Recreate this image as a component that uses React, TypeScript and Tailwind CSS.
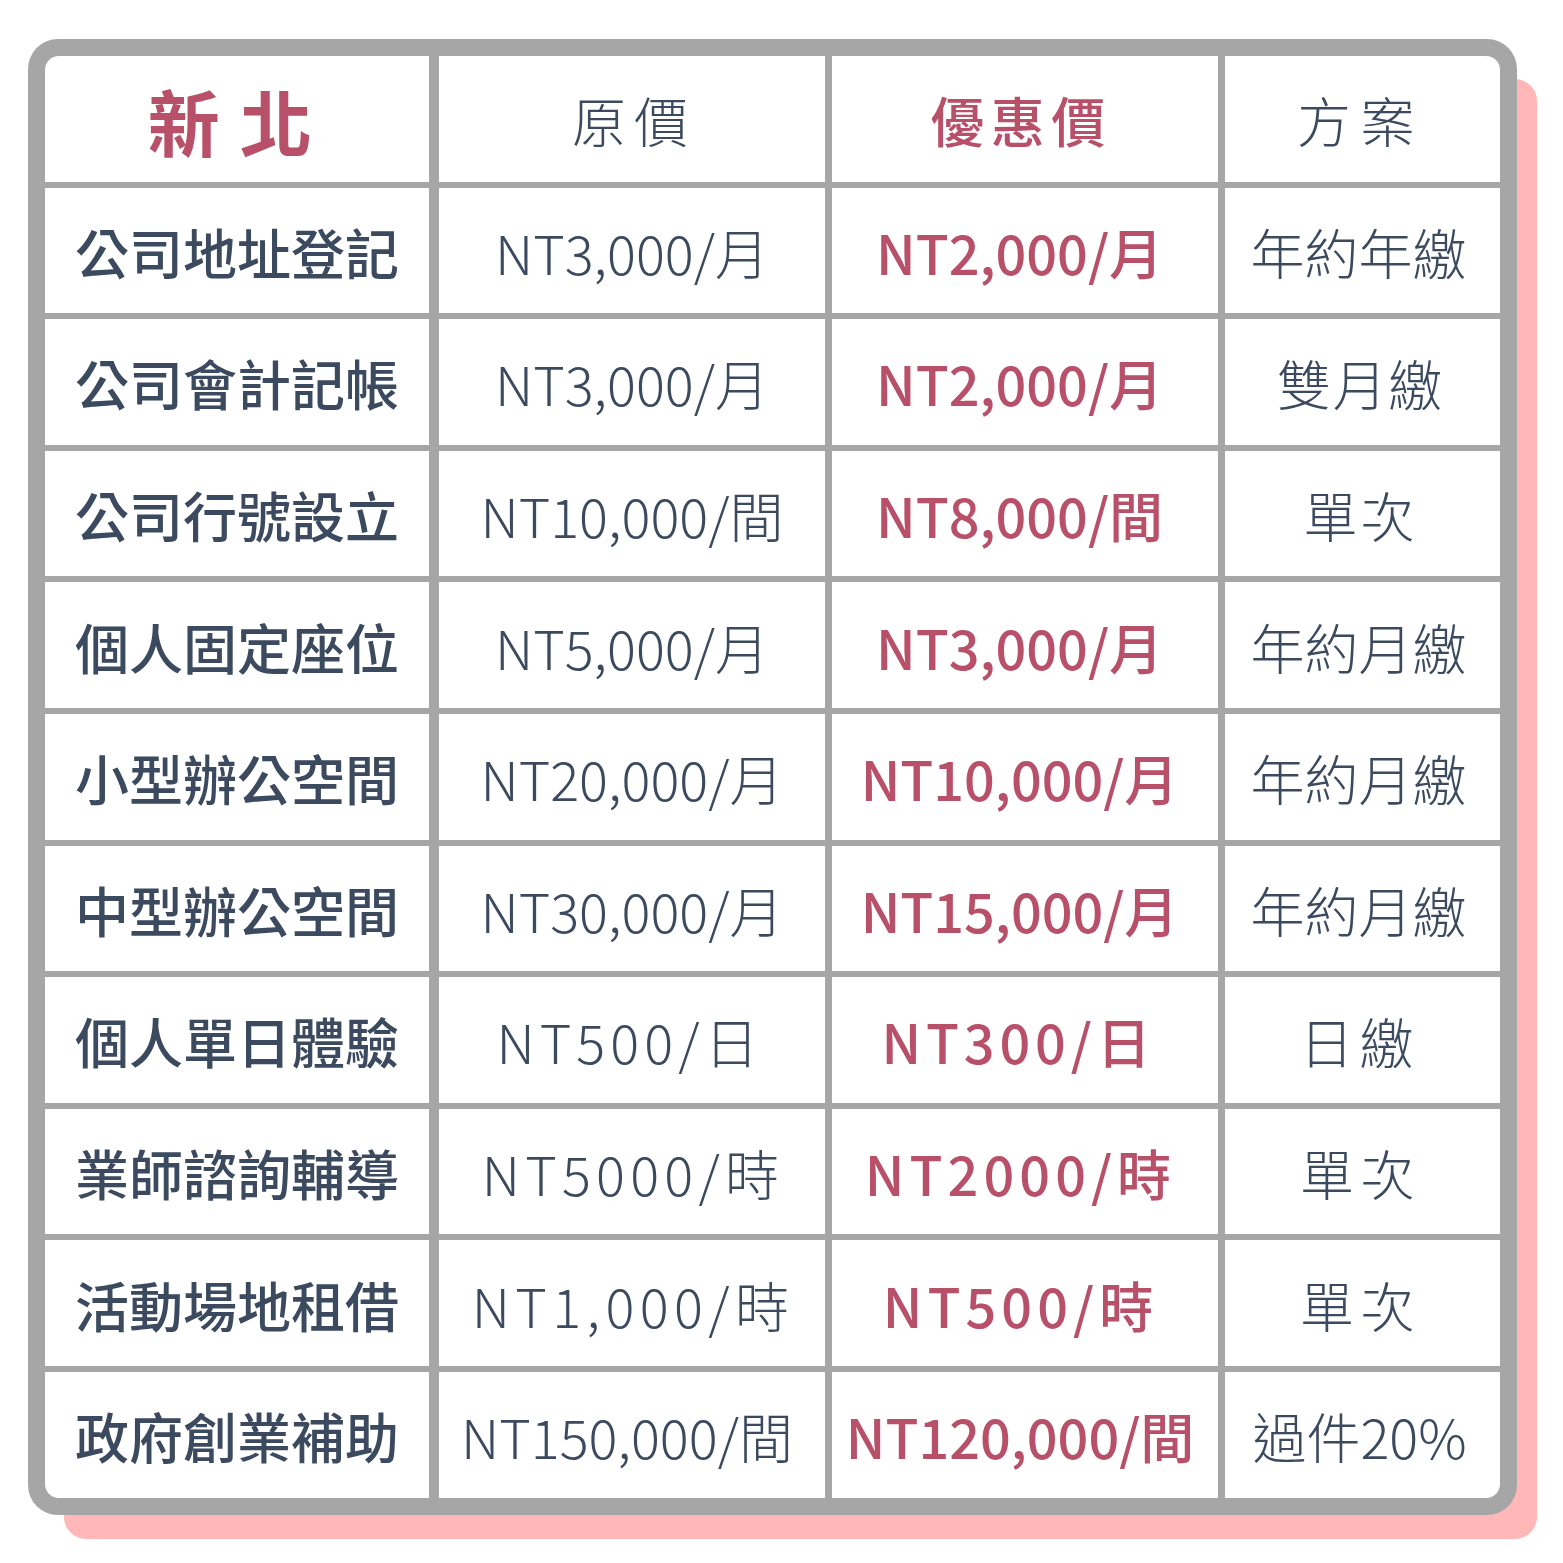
const font = "font-['Noto_Sans_CJK_TC','Noto_Sans_CJK_SC',sans-serif]";

type Row = {
  name: string;
  price: string;
  sale: string;
  plan: string;
  priceCls?: string;
  saleCls?: string;
  planCls?: string;
};

const rows: Row[] = [
  { name: "公司地址登記", price: "NT3,000/月", sale: "NT2,000/月", plan: "年約年繳" },
  { name: "公司會計記帳", price: "NT3,000/月", sale: "NT2,000/月", plan: "雙月繳", planCls: "tracking-[0.03em] pr-[4px]" },
  { name: "公司行號設立", price: "NT10,000/間", sale: "NT8,000/間", plan: "單次", planCls: "tracking-[0.055em] pr-[4px]" },
  { name: "個人固定座位", price: "NT5,000/月", sale: "NT3,000/月", plan: "年約月繳" },
  { name: "小型辦公空間", price: "NT20,000/月", sale: "NT10,000/月", plan: "年約月繳" },
  { name: "中型辦公空間", price: "NT30,000/月", sale: "NT15,000/月", plan: "年約月繳" },
  {
    name: "個人單日體驗",
    price: "NT500/日",
    sale: "NT300/日",
    plan: "日繳",
    priceCls: "tracking-[0.094em] pr-[4px]",
    saleCls: "tracking-[0.09em] pr-[13px]",
    planCls: "tracking-[0.11em] pr-[6px]",
  },
  {
    name: "業師諮詢輔導",
    price: "NT5000/時",
    sale: "NT2000/時",
    plan: "單次",
    priceCls: "tracking-[0.097em] pl-[2px]",
    saleCls: "tracking-[0.094em] pr-[9px]",
    planCls: "tracking-[0.12em] pr-[4px]",
  },
  {
    name: "活動場地租借",
    price: "NT1,000/時",
    sale: "NT500/時",
    plan: "單次",
    priceCls: "tracking-[0.1em] pl-[2px]",
    saleCls: "tracking-[0.094em] pr-[9px]",
    planCls: "tracking-[0.12em] pr-[4px]",
  },
  {
    name: "政府創業補助",
    price: "NT150,000/間",
    sale: "NT120,000/間",
    plan: "過件20%",
    priceCls: "pr-[10px]",
    saleCls: "pr-[10px]",
    planCls: "pr-[6px]",
  },
];

const cell = "bg-white flex items-center justify-center whitespace-nowrap pt-[3px]";
const first = `${cell} border-r-[3px] border-[#a6a6a6]`;

export default function App() {
  return (
    <div className={`w-[1563px] h-[1563px] bg-white ${font}`}>
      <div className="pl-[28px] pt-[39px]">
        <div className="w-[1489px] rounded-[30px] bg-[#a6a6a6] p-[17px] shadow-[28px_32px_0_-8px_#ffb7b7]">
          <div className="grid grid-cols-[387px_386px_386px_275px] auto-rows-[125.6px] gap-x-[7px] gap-y-[6px] rounded-[14px] overflow-hidden">
            {/* header */}
            <div className={first}>
              <span className="text-[72px] font-bold text-[#b9506a] tracking-[0.28em] pl-[6px] leading-none">
                新北
              </span>
            </div>
            <div className={cell}>
              <span className="text-[54px] font-light text-[#3b4a5e] tracking-[0.15em] pl-[4px] leading-none">
                原價
              </span>
            </div>
            <div className={cell}>
              <span className="text-[54px] font-medium text-[#b9506a] tracking-[0.12em] pr-[8px] leading-none">
                優惠價
              </span>
            </div>
            <div className={cell}>
              <span className="text-[54px] font-light text-[#3b4a5e] tracking-[0.175em] pr-[4px] leading-none">
                方案
              </span>
            </div>

            {rows.map((r) => (
              <>
                <div key={r.name + "a"} className={first}>
                  <span className="text-[54px] font-medium text-[#3b4a5e] leading-none">{r.name}</span>
                </div>
                <div key={r.name + "b"} className={cell}>
                  <span className={`text-[54px] font-light text-[#3b4a5e] leading-none ${r.priceCls ?? ""}`}>
                    {r.price}
                  </span>
                </div>
                <div key={r.name + "c"} className={cell}>
                  <span
                    className={`text-[54px] font-medium text-[#b9506a] leading-none ${r.saleCls ?? "pr-[11px]"}`}
                  >
                    {r.sale}
                  </span>
                </div>
                <div key={r.name + "d"} className={cell}>
                  <span className={`text-[54px] font-light text-[#3b4a5e] leading-none ${r.planCls ?? "pr-[8px]"}`}>
                    {r.plan}
                  </span>
                </div>
              </>
            ))}
          </div>
        </div>
      </div>
    </div>
  );
}
